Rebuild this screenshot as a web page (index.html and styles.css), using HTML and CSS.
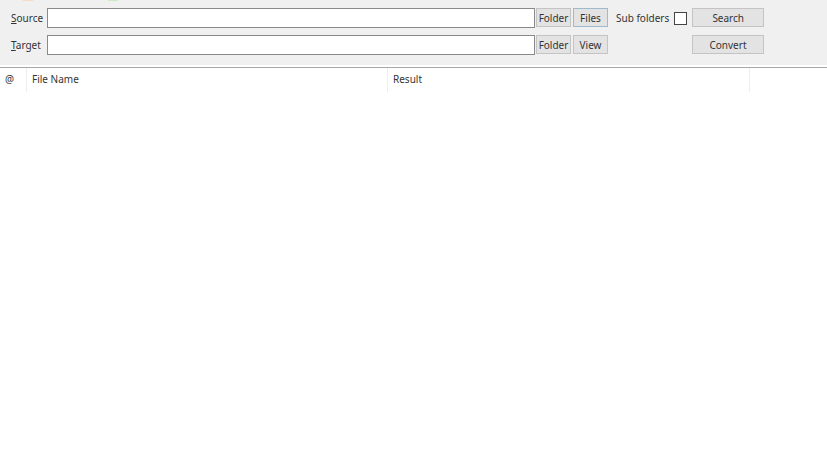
FILE: index.html
```html
<!DOCTYPE html>
<html lang="en">
<head>
    <meta charset="UTF-8">
    <meta name="viewport" content="width=device-width, initial-scale=1.0">
    <title>Converter</title>
    <link rel="stylesheet" href="styles.css">
</head>
<body>
    <div class="toolbar">
        <span class="tool-icon orange"></span>
        <span class="tool-icon green"></span>
    </div>
    <form class="panel">
        <div class="row">
            <label class="label"><u>S</u>ource</label>
            <input type="text" class="path">
            <button type="button" class="btn small">Folder</button>
            <button type="button" class="btn small active">Files</button>
            <span class="sub-label">Sub folders</span>
            <span class="check"></span>
            <button type="button" class="btn wide">Search</button>
        </div>
        <div class="row">
            <label class="label"><u>T</u>arget</label>
            <input type="text" class="path">
            <button type="button" class="btn small">Folder</button>
            <button type="button" class="btn small">View</button>
            <span class="spacer"></span>
            <button type="button" class="btn wide">Convert</button>
        </div>
    </form>
    <div class="list-head">
        <div class="col col-at">@</div>
        <div class="col col-name">File Name</div>
        <div class="col col-result">Result</div>
    </div>
</body>
</html>
```

FILE: styles.css
```css
* {
    box-sizing: border-box;
}
body {
    margin: 0;
    height: 461px;
    background: white;
    color: #333;
    font-family: 'Noto Sans', 'Open Sans', sans-serif;
    font-size: 10px;
    overflow: hidden;
}
.toolbar {
    display: flex;
    gap: 75px;
    height: 2px;
    padding-left: 23px;
    background: #f0f0f0;
    overflow: hidden;
}
.tool-icon {
    width: 10px;
    height: 1px;
}
.tool-icon.orange {
    background: #f9dcc0;
}
.tool-icon.green {
    background: #cfe8c8;
}
.panel {
    height: 65px;
    padding: 6px 0 0 11px;
    background: #f0f0f0;
    border-bottom: 2px solid white;
}
.row {
    display: flex;
    align-items: center;
    height: 20px;
    margin-bottom: 7px;
}
.label {
    width: 36px;
}
.path {
    width: 488px;
    height: 20px;
    border: 1px solid #8a8a8a;
    background: white;
}
.btn {
    align-self: flex-start;
    height: 19px;
    padding: 0;
    border: 1px solid #c4c4c4;
    background: #e3e3e3;
    color: #333;
    font-family: inherit;
    font-size: 10px;
}
.btn.small {
    width: 35px;
    margin-left: 1px;
}
.btn.small + .btn.small {
    margin-left: 2px;
}
.btn.active {
    border-color: #9fb9cf;
}
.btn.wide {
    width: 72px;
    margin-left: 5px;
}
.sub-label {
    margin-left: 8px;
}
.check {
    width: 13px;
    height: 13px;
    margin-left: 5px;
    border: 1px solid #444;
    background: white;
}
.spacer {
    width: 79px;
}
.list-head {
    display: flex;
    height: 25px;
    border-top: 1px solid #a8a8a8;
}
.col {
    padding: 4px 0 0 5px;
    border-right: 1px solid #eee;
}
.col-at {
    width: 27px;
}
.col-name {
    width: 361px;
}
.col-result {
    width: 362px;
}
```
